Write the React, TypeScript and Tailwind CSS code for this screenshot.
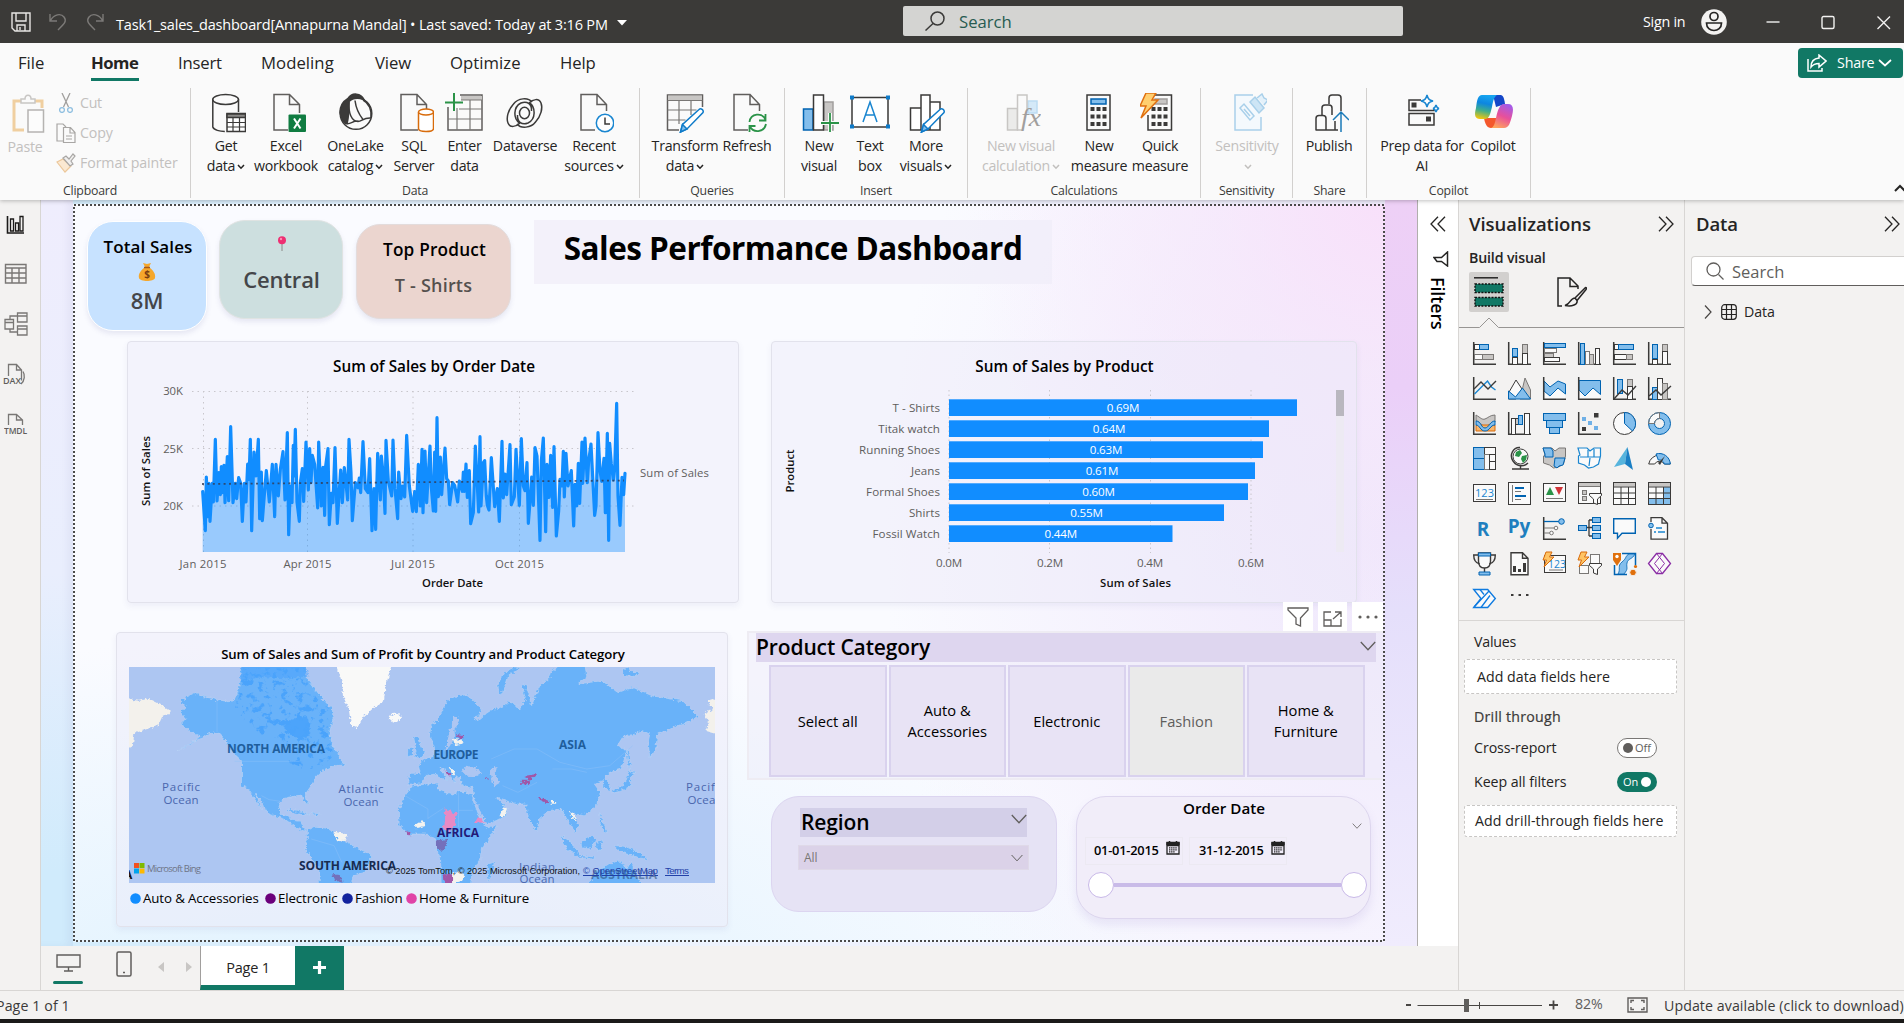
import React from "react";

type SvgProps = { children: React.ReactNode; className?: string };

const DK = "#3b3a39";
const BL = "#83beec";
const BS = "#0063b1";
const GR = "#c8c6c4";
const GS = "#797775";
const WH = "#fafafa";

const Box = ({ x, y, w, h, f = "none", s = DK }: { x: number; y: number; w: number; h: number; f?: string; s?: string }) => (
  <rect x={x + 0.5} y={y + 0.5} width={w} height={h} fill={f} stroke={s} />
);

const Ico = ({ children, className = "" }: SvgProps) => (
  <svg viewBox="0 0 40 40" fill="none" stroke={DK} strokeWidth="1.5" className={`h-10 w-10 shrink-0 ${className}`}>
    {children}
  </svg>
);

const Caret = ({ className = "" }: { className?: string }) => (
  <svg viewBox="0 0 8 6" className={`ml-0.5 inline-block h-1.5 w-2 ${className}`} fill="none" stroke="currentColor" strokeWidth="1.5">
    <path d="M1 1l3 3.2L7 1" />
  </svg>
);

/* ---------- ribbon icons ---------- */

const pencil = (
  <g stroke="#0f7bc9">
    <path d="M34 16.5c2-2 5 .8 4 3L22 36l-6.5 3 2-7.500z" fill="#fff" />
    <path d="M17.500 31.500l4.500 4.500-6.500 3z" fill={BL} />
  </g>
);

const GetData = (
  <Ico>
    <path d="M6.800 6.500v27.500c1 3 7 4.500 12 4.500M32.500 6.500V19" />
    <ellipse cx="19.600" cy="6.500" rx="12.900" ry="5" />
    <path d="M21 20.500h18.500v18H21z" fill="#fff" />
    <path d="M21 21h18.500v3.500H21z" fill="#8a8886" />
    <path d="M21 29.500h18.500M21 34h18.500M27 24v14.500M33.500 24v14.500" strokeWidth="1.200" />
  </Ico>
);
const Excel = (
  <Ico>
    <path d="M22 37H8V1.500h15.500l10 10V20M23.500 1.500v10h10" stroke="#605e5c" />
    <rect x="22.500" y="21.500" width="17.500" height="17.500" rx="1" fill="#107c41" stroke="none" />
    <path d="M28 25.500l6.500 10M34.500 25.500l-6.500 10" stroke="#fff" strokeWidth="2" />
  </Ico>
);
const OneLake = (
  <Ico>
    <circle cx="20" cy="20.500" r="15.800" />
    <path d="M12 5.500C16-1 25 0 28 6.500c-6-2-11-2-15 2 0 9 0 15-2 22-3 0-6-5-7-11 0-6 3-11 8-14z" fill={DK} />
    <path d="M13 8.500c-1 12 3 20 9 20 4 0 5-4 13-3.500M9 30c5 3 9-4 14-1.500M27 7c6 3 9 10 8 18M19 7.500c1 8 4 14 8 19" />
  </Ico>
);
const Sql = (
  <Ico>
    <path d="M24 37H7V1.500h16l9.500 10V17M23 1.500v10h9.500" stroke="#605e5c" />
    <path d="M24.500 19v16.500c0 4 15 4 15 0V19" fill="#fff" stroke="#d86b0b" />
    <ellipse cx="32" cy="19" rx="7.500" ry="3" fill="#fff" stroke="#d86b0b" />
  </Ico>
);
const Enter = (
  <Ico>
    <path d="M3 14v23h34V2H15" stroke="#605e5c" />
    <path d="M16 3h21v4H16z" fill={GR} stroke="none" />
    <path d="M12 15v22M25 7v30M3 26h34M14 16h23M16 7h21" stroke="#797775" strokeWidth="1.200" />
    <path d="M9 0v18M0 9.500h18" stroke="#2b9348" strokeWidth="2" />
  </Ico>
);
const Dataverse = (
  <Ico>
    <path d="M27 9C23 4 13 5 8.500 11 3 17 1 25 3 30c2 5 8 4 12 0" />
    <path d="M12 31c4 5 14 4 18.500-2 5.500-6 7.500-14 5.500-19-2-5-8-4-12 0" />
    <path d="M15 30.500C8 26 8 14 16 10c6-2.500 11 1 10.500 8M24 9.500c7 4.500 7 16.500-1 20.500-6 2.500-11-1-10.500-8" />
    <ellipse cx="19.500" cy="20" rx="5" ry="5.800" />
  </Ico>
);
const Recent = (
  <Ico>
    <path d="M21 37H7V1.500h16l9.500 10V18M23 1.500v10h9.500" stroke="#605e5c" />
    <circle cx="31" cy="30" r="8.700" fill="#fff" stroke="#1a86d0" />
    <path d="M31 24.500V31h5" />
  </Ico>
);
const Transform = (
  <Ico>
    <path d="M14 37H2.500V2h35v12" stroke="#605e5c" />
    <path d="M3 2.500h34V7H3z" fill={GR} stroke="none" />
    <path d="M2.500 7.500h35M2.500 17h29M2.500 27h18M14 7v24M26 7v15" stroke="#797775" strokeWidth="1.200" />
    {pencil}
  </Ico>
);
const Refresh = (
  <Ico>
    <path d="M21 37H7V1.500h16l9.500 10V18M23 1.500v10h9.500" stroke="#605e5c" />
    <path d="M22.500 29c1-9 13-10 16-2M38.500 21v6.500H32M39 31c-2 9-13 9-16 2.500M22.500 39v-6h6" stroke="#2b9348" strokeWidth="1.800" />
  </Ico>
);
const NewVisual = (
  <Ico>
    <path d="M4.500 16H14v21H4.500z" fill={BL} stroke={BS} />
    <path d="M25 9h9v28h-9z" fill={GR} stroke="#a19f9d" />
    <path d="M14.500 2h10v35h-10z" fill="#fff" />
    <path d="M31 20v19M22 30h18" stroke="#fafafa" strokeWidth="4" />
    <path d="M31 20v19M22 30h19" stroke="#2b9348" strokeWidth="1.800" />
  </Ico>
);
const TextBox = (
  <Ico>
    <path d="M2 4.500h36V34H2z" fill="#fff" />
    <path d="M13 29l7-20 7 20M15.500 22h9" stroke="#1a86d0" />
    <path d="M0 2.500h4v4H0zM36 2.500h4v4h-4zM0 31.500h4v4H0zM36 31.500h4v4h-4z" fill="#0f7bc9" stroke="none" />
  </Ico>
);
const MoreVisuals = (
  <Ico>
    <path d="M4.500 15H15v22H4.500zM24 9h10v28H24zM15 2h9v35h-9z" fill="#fff" />
    {pencil}
  </Ico>
);
const NewCalc = (
  <Ico>
    <g stroke="#c8c6c4">
      <path d="M6.500 15.500h10V37h-10z" fill="#ebebea" />
      <path d="M27 8h9v12h-9z" fill="#d4e9f8" stroke="#bcdcf2" />
      <path d="M26 18V2h-9.500v35H22" fill="#fafafa" />
    </g>
    <text x="20" y="33" fontFamily="Liberation Serif" fontStyle="italic" fontSize="25" fill="#a19f9d" stroke="none" textLength="20" lengthAdjust="spacingAndGlyphs">fx</text>
  </Ico>
);
const NewMeasure = (
  <Ico>
    <path d="M8 2h23v35H8z" />
    <path d="M12 6h15v5H12z" fill={BL} stroke={BS} />
    <path d="M11.500 16h16M11.500 23.500h16M11.500 31h16" strokeWidth="4" strokeDasharray="4 2" />
  </Ico>
);
const QuickMeasure = (
  <Ico>
    <path d="M14 2h17.500v35H8V22" />
    <path d="M15 6h12v5H15z" fill={GR} stroke="#a19f9d" />
    <path d="M11.500 16h16M11.500 23.500h16M11.500 31h16" strokeWidth="4" strokeDasharray="4 2" />
    <path d="M6 0h10l-4 7h6L1 25l5-12H0z" fill="#ffcf70" stroke="#e07010" />
  </Ico>
);
const Sensitivity = (
  <Ico>
    <g stroke="#a9d0ea">
      <path d="M26 2H8v35h26V24" fill="#f4f9fd" />
      <path d="M13 15l4-4 10 12-4 4zM17 16l6 7" />
      <path d="M23 9l5-5 9 11-5 5z" fill="#cde5f5" />
      <path d="M30 5l5-4 2 4 4 2-4 5" fill="#e4f1fa" />
    </g>
  </Ico>
);
const Publish = (
  <Ico>
    <path d="M7 37V25.500c0-2 1-3 3-3h4c2 0 3 1 3 3V37M13 22V15c0-2 1-3 3-3h4c2 0 3 1 3 3v7M20 11V5c0-2 1-3 3-3h6c2 0 3 1 3 3v13M6.500 37H29M26 37V28" />
    <path d="M32 39V19.500M24 27l8-8 8 8" stroke="#1a7ab8" />
  </Ico>
);
const Prep = (
  <Ico>
    <path d="M19 7H7v10.500h25V15M7 20.500h25V32H7z" />
    <path d="M9.500 9.500h5v5h-5zM24 23.500h5v5h-5z" fill={DK} stroke="none" />
    <path d="M25 2c1 4 2 5 6 6-4 1-5 2-6 6-1-4-2-5-6-6 4-1 5-2 6-6zM34 12c.5 2 1 3 3 3.500-2 .5-2.500 1.500-3 3.500-.5-2-1-3-3-3.500 2-.5 2.500-1.500 3-3.500z" fill="#fff" stroke="#1a86d0" />
  </Ico>
);
const Copilot = (
  <Ico>
    <defs>
      <linearGradient id="cpa" x1="0.500" y1="0" x2="0.300" y2="1">
        <stop offset="0" stopColor="#16a5f0" />
        <stop offset="0.350" stopColor="#0d86e0" />
        <stop offset="0.650" stopColor="#3fae8c" />
        <stop offset="1" stopColor="#f4c60c" />
      </linearGradient>
      <linearGradient id="cpb" x1="0.700" y1="0" x2="0.300" y2="1">
        <stop offset="0" stopColor="#a45be8" />
        <stop offset="0.500" stopColor="#e8509a" />
        <stop offset="1" stopColor="#ffa45c" />
      </linearGradient>
    </defs>
    <g stroke="none">
      <path d="M20 2h7c3 0 4 2 5 9l-9 3z" fill="#1547c8" />
      <path d="M11 25c1 6 3 10 7 10h5l2-10z" fill="#f4582c" />
      <path d="M9 2h15c-3 2-4 6-5 12-2 8-3 12-7 12H7c-5 0-6-4-4-11C4 7 5 2 9 2z" fill="url(#cpa)" />
      <path d="M31 11h4c5 0 6 4 4 12-2 7-3 12-8 12H18c3-1 4-5 5-10 2-9 4-14 8-14z" fill="url(#cpb)" />
    </g>
  </Ico>
);

type RItem = { icon: React.ReactNode; lines: [string, string?]; caret?: boolean; w: string; off?: boolean };
type RGroup = { label: string; w: string; pad: string; items: RItem[] };

const groups: RGroup[] = [
  {
    label: "Data", w: "w-[449px]", pad: "pl-[11px]",
    items: [
      { icon: GetData, lines: ["Get", "data"], caret: true, w: "w-12" },
      { icon: Excel, lines: ["Excel", "workbook"], w: "w-[72px]" },
      { icon: OneLake, lines: ["OneLake", "catalog"], caret: true, w: "w-[67px]" },
      { icon: Sql, lines: ["SQL", "Server"], w: "w-[50px]" },
      { icon: Enter, lines: ["Enter", "data"], w: "w-[51px]" },
      { icon: Dataverse, lines: ["Dataverse"], w: "w-[70px]" },
      { icon: Recent, lines: ["Recent", "sources"], caret: true, w: "w-[68px]" },
    ],
  },
  {
    label: "Queries", w: "w-[145px]", pad: "pl-2",
    items: [
      { icon: Transform, lines: ["Transform", "data"], caret: true, w: "w-[74px]" },
      { icon: Refresh, lines: ["Refresh"], w: "w-[50px]" },
    ],
  },
  {
    label: "Insert", w: "w-[183px]", pad: "pl-[5px]",
    items: [
      { icon: NewVisual, lines: ["New", "visual"], w: "w-[58px]" },
      { icon: TextBox, lines: ["Text", "box"], w: "w-11" },
      { icon: MoreVisuals, lines: ["More", "visuals"], caret: true, w: "w-[68px]" },
    ],
  },
  {
    label: "Calculations", w: "w-[233px]", pad: "pl-1.5",
    items: [
      { icon: NewCalc, lines: ["New visual", "calculation"], caret: true, w: "w-[94px]", off: true },
      { icon: NewMeasure, lines: ["New", "measure"], w: "w-[62px]" },
      { icon: QuickMeasure, lines: ["Quick", "measure"], w: "w-[60px]" },
    ],
  },
  { label: "Sensitivity", w: "w-[92px]", pad: "pl-1.5", items: [{ icon: Sensitivity, lines: ["Sensitivity", ""], caret: true, w: "w-20", off: true }] },
  { label: "Share", w: "w-[74px]", pad: "pl-[5px]", items: [{ icon: Publish, lines: ["Publish"], w: "w-[62px]" }] },
  {
    label: "Copilot", w: "w-[164px]", pad: "pl-[9px]",
    items: [
      { icon: Prep, lines: ["Prep data for", "AI"], w: "w-[92px]" },
      { icon: Copilot, lines: ["Copilot"], w: "w-[50px]" },
    ],
  },
];

const Ribbon = () => (
  <div className="relative z-10 flex h-[122px] shrink-0 bg-[#fafafa] pt-[10px] shadow-[0_1px_4px_rgba(0,0,0,0.25)]">
    <div className="flex h-[110px] w-[191px] shrink-0 flex-col border-r border-[#d2d0ce] text-[#c2c0be]">
      <div className="flex h-[90px] shrink-0">
        <div className="flex w-[58px] flex-col items-center pr-2 pt-1.5">
          <svg viewBox="0 0 40 40" className="ml-2.5 h-10 w-10 shrink-0" fill="none" strokeWidth="1.500">
            <path d="M14 36H4V7h7M25 7h7v7" stroke="#f0cfa0" strokeWidth="3" />
            <path d="M11 9V5h4c0-5 6-5 6 0h4v4z" stroke="#c8c6c4" fill="#fafafa" />
            <path d="M18 16h15.500v22H18z" stroke="#b5b3b1" fill="#fcfcfc" />
          </svg>
          <span className="mt-[3px] text-[14.200px] leading-5 tracking-[-0.200px]">Paste</span>
        </div>
        <div className="flex flex-col">
          <div className="flex h-[30px] items-center gap-1.5">
            <svg viewBox="0 0 16 20" className="h-5 w-4" fill="none" strokeWidth="1.300">
              <path d="M4 0l6.500 14M12 0L5.500 14" stroke="#a19f9d" />
              <circle cx="4" cy="17" r="2.400" stroke="#8fbfe0" />
              <circle cx="12" cy="17" r="2.400" stroke="#8fbfe0" />
            </svg>
            <span className="text-[14.200px] tracking-[-0.300px]">Cut</span>
          </div>
          <div className="flex h-[30px] items-center gap-1">
            <svg viewBox="0 0 20 20" className="-ml-0.5 h-5 w-5" fill="none" stroke="#a8a6a4" strokeWidth="1.200">
              <path d="M7 18H1V1h6l3 3M7.500 4.500h7l4.500 5V19.500H7.500zM14 5v5h5M10 13h6M10 16h6" />
            </svg>
            <span className="text-[14.200px] tracking-[-0.100px]">Copy</span>
          </div>
          <div className="flex h-[30px] items-center gap-1">
            <svg viewBox="0 0 20 20" className="-ml-0.5 h-5 w-5" fill="none" strokeWidth="1.200">
              <path d="M1 9l6-3 8 7-6 6z" fill="#fbe9d2" stroke="#ecc79a" />
              <path d="M7 5l3-2 3 3 4-5 2 2-4 5 2 3-3 2z" fill="#f0efee" stroke="#a8a6a4" />
            </svg>
            <span className="whitespace-nowrap text-[14.200px] tracking-[-0.100px]">Format painter</span>
          </div>
        </div>
      </div>
      <div className="mt-[3px] pr-2.5 text-center text-[12.300px] leading-5 tracking-[-0.200px] text-[#3b3a39]">Clipboard</div>
    </div>
    {groups.map((g) => (
      <div key={g.label} className={`flex h-[110px] shrink-0 flex-col border-r border-[#d2d0ce] ${g.w}`}>
        <div className={`flex h-[90px] shrink-0 pt-[5px] ${g.pad}`}>
          {g.items.map((it, i) => (
            <div key={i} className={`flex shrink-0 flex-col items-center ${it.w} ${it.off ? "text-[#c2c0be]" : "text-[#252423]"}`}>
              {it.icon}
              <div className="mt-[3px] whitespace-nowrap text-center text-[14.200px] leading-5 tracking-[-0.270px]">
                <div>{it.lines[0]}</div>
                {it.lines[1] !== undefined && (
                  <div>
                    {it.lines[1]}
                    {it.caret && <Caret />}
                  </div>
                )}
              </div>
            </div>
          ))}
        </div>
        <div className="mt-[3px] text-center text-[12.300px] leading-5 tracking-[-0.200px] text-[#3b3a39]">{g.label}</div>
      </div>
    ))}
    <div className="flex flex-1 items-end justify-end pb-1">
      <svg viewBox="0 0 12 8" className="-mr-0.5 mb-1 h-2 w-3" fill="none" stroke="#252423" strokeWidth="2">
        <path d="M1 7l5-5 5 5" />
      </svg>
    </div>
  </div>
);

const TitleBar = () => (
  <header className="flex h-[43px] shrink-0 items-center bg-[#3b3a38] text-white">
    <div className="flex w-[903px] items-center pl-[11px]">
      <svg viewBox="0 0 20 20" className="h-5 w-5" fill="none" stroke="#e8e6e4" strokeWidth="1.400">
        <path d="M1 1h18v18H4l-3-3zM5 1v8h10V1M6 19v-6h8v6M9 15v3" />
      </svg>
      <svg viewBox="0 0 18 18" className="ml-[18px] h-[18px] w-[18px]" fill="none" stroke="#7c7a78" strokeWidth="1.400">
        <path d="M1 1v7h7M1.500 7.500C5 1 12 0 15 4c3 4 1 6-6 13" />
      </svg>
      <svg viewBox="0 0 18 18" className="ml-[19px] h-[18px] w-[18px]" fill="none" stroke="#7c7a78" strokeWidth="1.400">
        <path d="M17 1v7h-7M16.500 7.500C13 1 6 0 3 4c-3 4-1 6 6 13" />
      </svg>
      <span className="ml-3 mt-1.5 whitespace-nowrap text-[14.500px] leading-5 tracking-[-0.190px]">
        Task1_sales_dashboard[Annapurna Mandal] • Last saved: Today at 3:16 PM
      </span>
      <svg viewBox="0 0 10 6" className="ml-[9px] mt-0.5 h-1.5 w-2.5" fill="#fff">
        <path d="M0 0h10L5 5.500z" />
      </svg>
    </div>
    <div className="mb-0.5 flex h-[30px] w-[500px] items-center rounded-[2px] bg-[#d4d4d2] pl-[22px]">
      <svg viewBox="0 0 20 20" className="h-5 w-5" fill="none" stroke="#3b3a39" strokeWidth="1.500">
        <circle cx="12.500" cy="7.500" r="6.500" />
        <path d="M8 12.500L.5 19.500" />
      </svg>
      <span className="ml-[14px] mt-0.5 text-[16.700px] text-[#275b50]">Search</span>
    </div>
    <div className="flex flex-1 items-center">
      <span className="ml-[240px] w-[46px] whitespace-nowrap text-[14.300px] tracking-[-0.250px]">Sign in</span>
      <svg viewBox="0 0 26 26" className="ml-3 h-[26px] w-[26px]" fill="none" stroke="#252423" strokeWidth="1.700">
        <circle cx="13" cy="13" r="12.800" fill="#f3f2f1" stroke="none" />
        <circle cx="13" cy="7.500" r="4" />
        <path d="M5.500 14h15c0 10-15 10-15 0z" />
      </svg>
      <svg viewBox="0 0 130 16" className="ml-[37px] mt-[3px] h-4 w-[130px]" fill="none" stroke="#f3f2f1" strokeWidth="1.400">
        <path d="M2.500 7h13" />
        <rect x="58" y="1.500" width="12" height="12" rx="1.500" />
        <path d="M113.500 1.500l12.500 12.500M126 1.500L113.500 14" />
      </svg>
    </div>
  </header>
);

const Menu = () => (
  <nav className="relative z-20 flex h-[35px] shrink-0 items-start bg-[#fafafa] text-[16.700px] text-[#252423]">
    <span className="ml-[18px] mt-2 w-[73px] leading-6">File</span>
    <span className="mt-2 flex h-[30px] w-12 flex-col justify-between whitespace-nowrap font-bold leading-6 tracking-[-0.500px]">
      Home
      <span className="h-[3px] w-12 shrink-0 bg-[#117865]" />
    </span>
    <span className="ml-[39px] mt-2 w-[83px] leading-6 tracking-[-0.200px]">Insert</span>
    <span className="mt-2 w-[114px] leading-6 tracking-[0.050px]">Modeling</span>
    <span className="mt-2 w-[75px] leading-6 tracking-[-0.100px]">View</span>
    <span className="mt-2 w-[110px] leading-6 tracking-[0.050px]">Optimize</span>
    <span className="mt-2 w-[75px] leading-6 tracking-[-0.100px]">Help</span>
    <span className="ml-auto mr-px mt-[5px] flex h-[30px] w-[105px] items-center rounded bg-[#117865] pl-[9px] text-white">
      <svg viewBox="0 0 20 18" className="h-[18px] w-5" fill="none" stroke="#fff" strokeWidth="1.500">
        <path d="M1 5v12h14v-3M12 1l7 6-7 6v-3.500c-4 0-6 1-8 3.500 0-5 3-8.500 8-9z" />
      </svg>
      <span className="ml-2.5 text-[14.300px] tracking-[-0.200px]">Share</span>
      <svg viewBox="0 0 14 8" className="ml-1 h-2 w-3.5" fill="none" stroke="#fff" strokeWidth="1.700">
        <path d="M1 1l6 5.500L13 1" />
      </svg>
    </span>
  </nav>
);

const Rail = () => (
  <aside className="flex w-[41px] shrink-0 flex-col border-r border-[#d8d6d4] bg-[#f3f2f1] pl-1 pt-[15px]">
    <svg viewBox="0 0 24 20" className="h-5 w-6" fill="none" stroke="#1b1a19" strokeWidth="1.300">
      <path d="M3.500 1v17H20" strokeWidth="1.600" />
      <path d="M6.500 4h3v12h-3zM11.500 8h3v8h-3zM16 1.500h3V16h-3z" />
    </svg>
    <svg viewBox="0 0 24 22" className="mt-7 h-[22px] w-6" fill="none" stroke="#797775" strokeWidth="1.400">
      <path d="M1.500 1.500H22v18.500H1.500zM1.500 5H22M1.500 10H22M1.500 15H22M8 5v15M15 5v15" />
    </svg>
    <svg viewBox="0 0 24 24" className="mt-[27px] h-6 w-6" fill="none" stroke="#797775" strokeWidth="1.300">
      <path d="M1 7.500h8.500v9.500H1zM1 10.500h8.500M13.500 1H23v9h-9.500zM13.500 4H23M13.500 14H23v9h-9.500zM13.500 17H23M6 7V4h7.500M6 17v3h7.500" />
    </svg>
    <svg viewBox="0 0 24 24" className="mt-[27px] h-6 w-6 overflow-visible" fill="none" stroke="#797775" strokeWidth="1.300">
      <path d="M4.500 13V1.500h8l5 5.500v10.500M12.500 1.500V7h5M19 8.500c2 3 2 9-2 12.500" />
      <text x="-1" y="21" fontSize="9" fontFamily="Open Sans" fill="#605e5c" stroke="none" fontWeight="600" textLength="18">DAX</text>
    </svg>
    <svg viewBox="0 0 24 24" className="mt-[26px] h-6 w-6" fill="none" stroke="#797775" strokeWidth="1.300">
      <path d="M4.500 12V1.500h8l6 5.500v5M12.500 1.500V7h6" />
      <text x="0" y="21" fontSize="8.500" fontFamily="Open Sans" fill="#605e5c" stroke="none" fontWeight="600" textLength="23">TMDL</text>
    </svg>
  </aside>
);

/* ---------- report visuals ---------- */

const series =
  "20,287 28,404 31,243 36,362 39,262 42,376 49,262 52,318 58,130 63,315 69,230 73,296 76,212 79,290 84,208 87,320 94,182 98,314 104,92 111,320 118,262 122,308 128,245 134,262 139,376 145,262 150,318 155,204 159,250 163,130 167,404 174,168 180,240 187,130 191,368 196,228 199,374 204,310 211,224 220,318 229,205 236,362 240,205 247,300 253,220 261,167 267,312 274,110 278,416 283,270 288,320 292,148 294,240 298,100 303,318 310,376 313,260 319,218 323,316 330,138 337,282 341,158 345,260 349,178 356,205 365,336 368,138 376,330 381,214 386,358 389,210 396,158 400,386 406,292 411,320 417,155 424,382 430,282 434,222 439,320 445,215 455,312 459,130 465,230 469,374 478,260 486,275 490,246 494,290 501,137 508,278 516,290 521,188 528,404 534,278 539,400 545,172 553,312 556,180 561,230 567,352 570,133 577,255 587,300 591,132 597,278 605,368 608,228 615,308 620,270 626,303 632,118 640,270 650,346 656,287 661,347 667,205 673,330 678,160 681,350 687,165 692,320 702,150 706,275 712,345 716,168 719,346 723,65 727,302 733,183 737,296 747,156 752,248 757,255 761,326 770,260 776,268 785,318 790,255 799,286 802,228 805,286 810,204 814,304 820,224 824,383 832,350 838,150 848,348 852,122 855,330 862,200 866,194 871,300 874,328 879,342 886,185 896,332 904,278 910,376 918,136 922,306 927,234 932,296 942,146 946,326 955,302 960,160 970,328 976,128 982,270 987,284 993,200 997,382 1002,318 1007,243 1012,328 1017,155 1023,180 1032,433 1036,195 1042,126 1049,407 1053,205 1059,304 1064,178 1070,334 1074,152 1081,420 1088,345 1092,250 1098,270 1102,166 1105,303 1110,172 1116,270 1126,224 1133,390 1137,265 1142,330 1147,202 1151,322 1158,138 1160,262 1167,126 1174,260 1178,195 1185,144 1196,358 1200,330 1206,110 1212,225 1217,256 1224,187 1228,350 1234,112 1238,433 1241,142 1246,204 1252,252 1256,220 1262,22 1266,300 1272,388 1278,244 1283,296 1287,232";

const card = "absolute rounded-[4px] border border-[#e2e2ec] bg-[#ece8f8]/45 shadow-[0_3px_6px_rgba(90,90,160,0.08)]";

const LineChart = () => (
  <div className={`${card} left-[54px] top-[137px] h-[262px] w-[612px]`}>
    <div className="mt-3 pl-0.5 text-center text-[15.300px] font-semibold leading-6 tracking-[0.020px]">Sum of Sales by Order Date</div>
    <svg viewBox="128 342 611 262" className="absolute left-0 top-0 h-[262px] w-[611px]" fontFamily="Open Sans" fontSize="11.300" fill="#605e5c">
      <g stroke="#c8c6cc" strokeDasharray="1.500 4">
        <path d="M192 391.500H634M192 448.500H634M192 506H634M203.500 391V552M307.500 391V552M413 391V552M519.500 391V552" />
      </g>
      <g transform="translate(196 396) scale(.33333)">
        <polygon points={`20,468 ${series} 1287,468`} fill="#118dff" fillOpacity=".4" />
        <polyline points={series} fill="none" stroke="#118dff" strokeWidth="9.500" strokeLinejoin="round" strokeLinecap="round" />
      </g>
      <path d="M202 484L624 480.500" stroke="#353a50" strokeWidth="1.800" strokeDasharray="2 3.400" strokeOpacity=".8" />
      <g textAnchor="end">
        <text x="183" y="395">30K</text>
        <text x="183" y="452.500">25K</text>
        <text x="183" y="510">20K</text>
      </g>
      <g textAnchor="middle">
        <text x="203" y="567.500" textLength="47">Jan 2015</text>
        <text x="307.500" y="567.500" textLength="48">Apr 2015</text>
        <text x="413" y="567.500" textLength="44">Jul 2015</text>
        <text x="519.500" y="567.500" textLength="49">Oct 2015</text>
        <g fill="#111" fontWeight="600">
          <text x="452.500" y="586.500" textLength="61">Order Date</text>
          <text transform="translate(150 471) rotate(-90)" textLength="70">Sum of Sales</text>
        </g>
      </g>
      <text x="640" y="477" textLength="69">Sum of Sales</text>
    </svg>
  </div>
);

const bars: [string, string, number][] = [
  ["T - Shirts", "0.69M", 348],
  ["Titak watch", "0.64M", 320],
  ["Running Shoes", "0.63M", 314],
  ["Jeans", "0.61M", 306],
  ["Formal Shoes", "0.60M", 299],
  ["Shirts", "0.55M", 275],
  ["Fossil Watch", "0.44M", 223.500],
];

const BarChart = () => (
  <div className={`${card} left-[698px] top-[137px] h-[262px] w-[586px]`}>
    <div className="mt-3 pl-px text-center text-[15.300px] font-semibold leading-6 tracking-[0.050px]">Sum of Sales by Product</div>
    <svg viewBox="772 342 586 262" className="absolute left-0 top-0 h-[262px] w-[586px]" fontFamily="Open Sans" fontSize="11.600" fill="#605e5c">
      <path d="M949 390V553M1049.500 390V553M1150.500 390V553M1251 390V553" stroke="#c8c6cc" strokeDasharray="1.500 3" />
      {bars.map(([name, v, w], i) => (
        <g key={name}>
          <rect x="949" y={399.300 + i * 21} width={w} height="16.700" fill="#118dff" />
          <text x="940" y={411.500 + i * 21} textAnchor="end" letterSpacing="0.050">{name}</text>
          <text x={949 + w / 2} y={411.500 + i * 21} textAnchor="middle" fill="#fff" letterSpacing="-0.200">{v}</text>
        </g>
      ))}
      <g textAnchor="middle">
        <text x="949" y="567" letterSpacing="-0.200">0.0M</text>
        <text x="1050" y="567" letterSpacing="-0.200">0.2M</text>
        <text x="1150" y="567" letterSpacing="-0.200">0.4M</text>
        <text x="1251" y="567" letterSpacing="-0.200">0.6M</text>
        <g fill="#111" fontWeight="600" fontSize="11.300">
          <text x="1135.500" y="586.500" textLength="71">Sum of Sales</text>
          <text transform="translate(794 471) rotate(-90)" textLength="43">Product</text>
        </g>
      </g>
      <rect x="1336" y="390" width="8" height="162" fill="#edeaf3" />
      <rect x="1336" y="390" width="8" height="26" fill="#b9b7bf" />
    </svg>
  </div>
);

const legend: [string, string, string][] = [
  ["Auto & Accessories", "fill-[#118dff]", "w-[135px]"],
  ["Electronic", "fill-[#6b007b]", "w-[77px]"],
  ["Fashion", "fill-[#12239e]", "w-[64px]"],
  ["Home & Furniture", "fill-[#e044a7]", "w-[125px]"],
];

const MapVisual = () => (
  <div className={`${card} left-[43px] top-[428px] h-[295px] w-[612px] pl-3 pr-2.5`}>
    <div className="mt-[11px] whitespace-nowrap text-center text-[13.200px] font-semibold leading-5 tracking-[-0.100px]">
      Sum of Sales and Sum of Profit by Country and Product Category
    </div>
    <div className="relative mt-[3px] h-[216px] w-[586px] overflow-hidden bg-[#adc6f2]">
      <svg viewBox="24 24 1531 648" preserveAspectRatio="none" className="absolute inset-0 h-full w-full">
        <defs>
          <filter id="coast" x="-5%" y="-5%" width="110%" height="110%" colorInterpolationFilters="sRGB">
            <feTurbulence type="fractalNoise" baseFrequency="0.120" numOctaves="3" seed="4" />
            <feDisplacementMap in="SourceGraphic" scale="14" xChannelSelector="R" yChannelSelector="G" />
          </filter>
          <filter id="lakes" x="0" y="0" width="100%" height="100%" colorInterpolationFilters="sRGB">
            <feTurbulence type="fractalNoise" baseFrequency="0.050" numOctaves="4" seed="9" />
            <feColorMatrix values="0 0 0 0 .29  0 0 0 0 .64  0 0 0 0 .985  0 9 0 0 -4.900" />
            <feComposite in2="SourceGraphic" operator="in" />
          </filter>
        </defs>
        <g filter="url(#coast)">
          <g fill="#f9f9f8">
            <path d="M565,10L580,70 583,110 598,150 605,200 620,208 635,175 665,145 690,125 695,80 712,10z" />
            <path d="M0,118L50,125 75,118 105,135 135,160 110,175 100,200 60,215 38,222 34,260 0,280z" fill="#f3f1ec" />
            <path d="M1590,105L1535,125 1550,150 1525,165 1540,190 1530,215 1590,235z" fill="#f3f1ec" />
            <ellipse cx="720" cy="176" rx="15" ry="12" />
          </g>
          <g fill="#69b2f9" stroke="#bdd6f5" strokeWidth="1.500" strokeLinejoin="round">
            <path d="M320,5L315,60 308,100 300,122 285,128 255,122 225,115 195,102 170,115 160,130 172,145 158,160 172,178 160,195 178,212 195,225 212,232 185,255 150,277 190,248 218,236 230,225 255,220 270,235 280,255 295,280 318,305 318,380 335,390 352,420 372,452 355,405 368,425 390,465 430,480 455,500 475,515 490,515 480,505 472,487 450,484 440,470 423,468 415,435 430,418 455,412 475,408 482,432 492,435 485,405 500,380 515,350 530,335 560,320 590,318 575,300 570,280 555,260 548,220 557,180 555,150 530,120 510,90 490,60 485,5z" />
            <path d="M490,515L510,502 550,510 575,540 600,555 625,570 655,585 655,605 640,640 610,650 600,690 522,690 520,625 500,600 483,570 490,540z" />
            <path d="M765,380L830,372 835,395 870,408 885,395 920,405 925,430 945,490 958,508 985,500 965,540 945,570 940,605 920,640 915,690 840,690 838,600 825,570 830,545 800,525 755,525 730,500 728,450 745,410z" />
            <path d="M810,230L812,200 830,185 840,160 855,125 880,110 905,108 925,125 945,150 940,170 925,175 935,185 955,165 975,150 1000,145 1020,125 1045,150 1060,120 1050,80 1060,75 1070,110 1075,140 1085,110 1100,75 1120,60 1125,40 1160,10 1215,16 1220,55 1195,75 1230,70 1260,65 1300,100 1340,85 1390,110 1440,120 1470,125 1510,170 1500,180 1475,195 1455,200 1430,215 1405,225 1400,270 1385,295 1380,250 1385,225 1365,215 1340,230 1315,232 1300,260 1325,275 1310,330 1280,340 1265,355 1275,365 1282,395 1262,385 1262,365 1240,375 1255,400 1245,440 1215,470 1185,465 1200,500 1190,520 1170,485 1155,450 1120,455 1095,480 1090,520 1068,480 1060,435 1030,435 1000,420 985,415 1012,450 1010,470 960,497 935,450 925,420 922,385 892,378 890,352 875,355 875,372 855,335 835,325 858,368 820,345 800,350 785,375 755,375 757,343 785,343 780,320 790,305 820,290 822,265z" />
            <path d="M768,235l14,0 4,25 12,20 -8,15 -22,2 6,-20zM752,268l14,-4 -2,24 -12,6z" />
            <path d="M990,105L988,75 1005,40 1030,24 1045,26 1012,55 1000,100z" />
            <path d="M1327,270l8,50 -6,10 -5,-50zM1330,335l16,6 -12,10 0,30 -22,14 -26,8 2,-10 26,-12 10,-20z" />
            <path d="M960,615l18,-6 -4,35 -12,22z" />
            <path d="M1150,530l20,12 35,45 -8,6 -30,-25zM1200,590l40,4 0,6 -40,-4zM1205,550l30,-22 8,14 -12,28 -24,-4zM1245,550l16,-4 -4,28 -10,0zM1290,560l30,2 40,20 20,20 -30,-8 -40,-14zM1255,460l8,30 12,30 -10,-2 -12,-30z" />
            <path d="M1220,690L1240,642 1280,615 1300,604 1315,612 1325,630 1335,608 1350,650 1372,690z" />
            <path d="M435,452l30,2 30,12 -14,2 -46,-12zM500,462l24,3 -10,6z" />
            <path d="M1310,32l20,-8 4,14 24,0 -10,14 -30,-2z" />
          </g>
          <g fill="#adc6f2">
            <path d="M850,275L858,235 868,198 868,175 882,172 886,192 874,210 876,232 862,262z" />
            <path d="M895,338L905,320 925,325 947,340 930,352 905,350z" />
            <path d="M968,335L985,322 982,345 992,372 978,382 972,360z" />
            <path d="M918,415L935,440 957,490 962,500 945,480z" />
          </g>
          <path d="M430,200l20,-20 30,-10 12,10 5,30 -10,25 -20,14 -14,-20 -22,-10z" fill="#4ca4fb" />
          <path d="M318,10h165l10,42 -60,6 -60,-4 -60,12z" fill="#4ca4fb" fillOpacity=".6" />
          <path d="M560,518l32,8 0,16 -26,2zM870,240l22,2 4,12 -20,4zM862,325l10,4 4,20 -8,-2zM770,500l20,-14 8,14 -22,8zM868,672v-28l20,-8 12,14 -12,22zM992,472l10,-30 10,6 -6,22zM1172,455l14,6 8,24 -12,-8zM1128,426h12v8h-12z" fill="#f4f3ef" />
          <path d="M848,448L880,465 876,500 862,520 846,510 850,480zM928,490l8,-16 18,18z" fill="#e88ac4" />
          <path d="M826,545l30,-6 -2,22 -14,14 -14,-8zM552,645l24,4 6,22 -18,-6z" fill="#7470bb" />
          <path d="M846,646h22v40h-18zM1060,350l34,-6 -14,14 -14,4zM1050,365l22,0 -4,10 -20,2zM1095,415l28,12 -6,5 -20,-10zM878,226l20,2 -2,14 -12,-4zM848,332l16,12 -4,6zM748,515l14,14 -10,-2zM955,354l10,4 -4,8z" fill="#a057a8" />
        </g>
        <path d="M322,28L318,60 308,115 300,150 350,220 420,240 450,330 520,330 560,290 542,220 548,150 490,70 482,28z" fill="#fff" filter="url(#lakes)" />
        <path d="M254,122V220M300,307H470M370,410l20,12 30,5M745,410l60,40 0,30M805,478l40,-30M885,400v54h38M885,454v50M970,300l60,-30 60,0 60,40 70,20 60,-10 60,-60M1130,330l50,0 40,10M1000,380l40,20 50,-30M500,540l60,20 20,50" fill="none" stroke="#8fc1f7" strokeWidth="1.200" />
      </svg>
      <svg viewBox="129 668 586 216" className="absolute inset-0 h-full w-full" fontFamily="Open Sans">
        <g fontSize="12" fontWeight="700" fill="#1f5e9c">
          <text x="227" y="754" textLength="98">NORTH AMERICA</text>
          <text x="433.500" y="760" textLength="45">EUROPE</text>
          <text x="559" y="750" textLength="27">ASIA</text>
          <text x="437" y="838" textLength="42" fill="#231a78">AFRICA</text>
          <text x="299" y="871" textLength="97" fill="#182c50">SOUTH AMERICA</text>
          <text x="591" y="880" textLength="66" fill="#1c3d66" fillOpacity=".5">AUSTRALIA</text>
          <text x="124" y="880" fill="#111">A</text>
        </g>
        <g fontSize="11.500" fill="#4a66ae" textAnchor="middle">
          <text x="181" y="792" textLength="38">Pacific</text>
          <text x="181" y="805" textLength="35">Ocean</text>
          <text x="361" y="794" textLength="45">Atlantic</text>
          <text x="361" y="807" textLength="35">Ocean</text>
          <text x="705" y="792" textLength="38">Pacific</text>
          <text x="705" y="805" textLength="35">Ocean</text>
          <text x="537" y="872" textLength="36">Indian</text>
          <text x="537" y="884" textLength="35">Ocean</text>
        </g>
        <path d="M134 864h5v5h-5z" fill="#f25022" />
        <path d="M139.500 864h5v5h-5z" fill="#7fba00" />
        <path d="M134 869.500h5v5h-5z" fill="#00a4ef" />
        <path d="M139.500 869.500h5v5h-5z" fill="#ffb900" />
        <text x="147" y="873" fontSize="9.500" fill="#6d7486" textLength="54">Microsoft Bing</text>
        <g fontFamily="Liberation Sans" fontSize="9.800" fill="#111">
          <text x="386" y="875" textLength="194" lengthAdjust="spacingAndGlyphs">© 2025 TomTom, © 2025 Microsoft Corporation,</text>
          <g fill="#1f3fa8" textDecoration="underline">
            <text x="583" y="875" textLength="75" lengthAdjust="spacingAndGlyphs">© OpenStreetMap</text>
            <text x="665" y="875" textLength="24">Terms</text>
          </g>
        </g>
      </svg>
    </div>
    <div className="mt-[3px] flex">
      {legend.map(([name, fill, w]) => (
        <span key={name} className={`flex items-center whitespace-nowrap text-[13.300px] leading-6 tracking-[-0.120px] ${w}`}>
          <svg viewBox="0 0 11 11" className={`ml-px mr-0.5 h-[11px] w-[11px] shrink-0 ${fill}`}>
            <circle cx="5.500" cy="5.500" r="5.300" />
          </svg>
          {name}
        </span>
      ))}
    </div>
  </div>
);

const Chevron = ({ className = "" }: { className?: string }) => (
  <svg viewBox="0 0 16 10" className={className} fill="none" stroke="#605e5c" strokeWidth="1.300">
    <path d="M.8 1L8 8.800 15.200 1" />
  </svg>
);

const tile = "flex h-28 w-[117.500px] items-center justify-center border-2 border-[#d9d2ee] bg-[#e8e3f5] text-center text-[14.700px] leading-[21px]";

const CategorySlicer = () => (
  <div className="absolute left-[674px] top-[427px] h-[149px] w-[637px] border-2 border-r-0 border-[#eeecf3] bg-[#ece8f8]/40">
    <div className="ml-[7px] flex h-[29px] w-[620px] justify-between bg-[#ded6ef]">
      <span className="whitespace-nowrap text-[21px] font-semibold leading-[28px] tracking-[-0.120px]">Product Category</span>
      <Chevron className="mt-2 h-[10px] w-4" />
    </div>
    <div className="ml-5 mt-[3px] flex gap-[2px]">
      <div className={tile}>Select all</div>
      <div className={tile}>Auto &amp;<br />Accessories</div>
      <div className={tile}>Electronic</div>
      <div className="flex h-28 w-[117.500px] items-center justify-center border-2 border-[#d9d2ee] bg-[#eaeaea] text-[14.700px] text-[#605e5c]">Fashion</div>
      <div className={tile}>Home &amp;<br />Furniture</div>
    </div>
  </div>
);

const tool = "flex h-[29px] items-center justify-center bg-white";

const VisualTools = () => (
  <div className="absolute left-[1210px] top-[398px] flex gap-[5px]">
    <span className={`${tool} w-[30px]`}>
      <svg viewBox="0 0 22 20" className="h-5 w-[22px]" fill="none" stroke="#605e5c" strokeWidth="1.300">
        <path d="M1 1h20v2l-7.500 8v8l-4.500-2v-6L1 3z" />
      </svg>
    </span>
    <span className={`${tool} w-[29px]`}>
      <svg viewBox="0 0 19 16" className="mt-1 h-4 w-[19px]" fill="none" stroke="#605e5c" strokeWidth="1.300">
        <path d="M8 1H1v14h17V8M1 9h7v6M10 8l8-7M12 1h6v5" />
      </svg>
    </span>
    <span className={`${tool} w-[31px]`}>
      <svg viewBox="0 0 20 4" className="h-1 w-5" fill="#605e5c">
        <circle cx="2" cy="2" r="1.600" />
        <circle cx="10" cy="2" r="1.600" />
        <circle cx="18" cy="2" r="1.600" />
      </svg>
    </span>
  </div>
);

const RegionSlicer = () => (
  <div className="absolute left-[698px] top-[592px] h-[116px] w-[286px] rounded-[28px] border border-[#dcd5f0] bg-[#e6e3f5]">
    <div className="ml-[28px] mt-[11px] flex h-[29px] w-[227px] justify-between bg-[#d3cfe8]">
      <span className="pl-px text-[21px] font-semibold leading-[29px] tracking-[-0.100px]">Region</span>
      <Chevron className="mt-1.5 h-[10px] w-4" />
    </div>
    <div className="ml-[26px] mt-2 flex h-[25px] w-[231px] items-center justify-between border border-[#dfd9e8] bg-[#dbd2e8] px-[5px] text-[12px] text-[#797775]">
      <span>All</span>
      <Chevron className="h-2 w-3" />
    </div>
  </div>
);

const Calendar = () => (
  <svg viewBox="0 0 14 14" className="mb-1.5 h-3.5 w-3.5" fill="none" stroke="#222" strokeWidth="1.300">
    <path d="M1 2h12v11H1zM1 4.500h12" />
    <path d="M1 1.500h12v2H1z" fill="#222" />
    <path d="M3.500 0v2M10.500 0v2" strokeWidth="1.500" />
    <path d="M3 6.800h8.500M3 8.800h8.500M3 10.800h6" strokeWidth="1.200" strokeDasharray="1.400 .7" />
  </svg>
);

const DateSlicer = () => (
  <div className="absolute left-[1003px] top-[592px] h-[123px] w-[295px] rounded-[30px] border border-[#ddd6ee] bg-[#f1edf9] shadow-[0_6px_10px_rgba(150,130,200,0.15)]">
    <div className="mt-px pl-px text-center text-[15.200px] font-semibold leading-5">Order Date</div>
    <div className="flex justify-end pr-2">
      <Chevron className="mt-[5px] h-1.5 w-2.5" />
    </div>
    <div className="ml-2 mt-2 flex gap-1.5 text-[12.800px] font-semibold tracking-[-0.220px]">
      <span className="flex h-7 w-[98px] items-center justify-between border border-[#ece9f2] pl-2 pr-[2px]">01-01-2015<Calendar /></span>
      <span className="flex h-7 w-[98px] items-center justify-between border border-[#ece9f2] pl-[9px] pr-px">31-12-2015<Calendar /></span>
    </div>
    <div className="ml-[11px] mt-[7px] flex w-[279px] items-center">
      <span className="h-[26px] w-[26px] rounded-full border-[1.500px] border-[#c8b8e8] bg-white" />
      <span className="h-1 flex-1 bg-[#c9bbe8]" />
      <span className="h-[26px] w-[26px] rounded-full border-[1.500px] border-[#c8b8e8] bg-white" />
    </div>
  </div>
);

const Page = () => (
  <div className="relative mt-1 h-[738px] w-[1312px] shrink-0 bg-[radial-gradient(ellipse_420px_420px_at_100%_0%,#f8e0fa_0%,#f6e4fa99_40%,transparent_100%),radial-gradient(ellipse_500px_700px_at_100%_45%,#f0e8fc_0%,transparent_100%),radial-gradient(ellipse_900px_420px_at_20%_115%,#dcf1fe_0%,transparent_100%)] bg-[#fafbff]">
    <div className="absolute left-[14px] top-[17px] flex h-[110px] w-[120px] flex-col items-center rounded-[26px] border border-white bg-[#c7e2ff] pt-[13px] shadow-[0_3px_5px_rgba(90,90,160,0.12)]">
      <span className="whitespace-nowrap pl-0.5 text-[17px] font-semibold leading-6 tracking-[0.100px]">Total Sales</span>
      <svg viewBox="0 0 18 20" className="mt-[3px] h-5 w-[18px]">
        <path d="M5 1l2 4C3 8 0 12 1 16c1 4 15 4 16 0 1-4-2-8-6-11l2-4-4 1z" fill="#f5a72c" />
        <path d="M6 5.500h6" stroke="#a5571a" strokeWidth="1.500" />
        <text x="9" y="16" textAnchor="middle" fontFamily="Open Sans" fontWeight="700" fontSize="10" fill="#7a3d12">$</text>
      </svg>
      <span className="mt-1 text-[22px] font-semibold leading-7 tracking-[-0.100px] text-[#44464a]">8M</span>
    </div>
    <div className="absolute left-[146px] top-4 flex h-[99px] w-[124px] flex-col items-center rounded-[26px] border border-[#dfe3e2] bg-[#cddfdf] pl-px pt-[15px] shadow-[0_3px_5px_rgba(90,90,160,0.12)]">
      <svg viewBox="0 0 10 15" className="h-[15px] w-2.5">
        <path d="M5 7v8" stroke="#8a8886" />
        <circle cx="5" cy="4.200" r="4" fill="#ee2f72" />
        <circle cx="4" cy="3" r="1.200" fill="#ff8db4" />
      </svg>
      <span className="mt-3.5 text-[22px] font-semibold leading-7 tracking-[-0.150px] text-[#44464a]">Central</span>
    </div>
    <div className="absolute left-[283px] top-5 flex h-[95px] w-[155px] flex-col items-center rounded-[24px] border border-[#e3dcdc] bg-[#ebd5cf] pt-[13px] shadow-[0_3px_5px_rgba(90,90,160,0.12)]">
      <span className="whitespace-nowrap pl-0.5 text-[17.200px] font-semibold leading-6 tracking-[0.200px]">Top Product</span>
      <span className="mt-[11px] text-[18px] font-semibold leading-6 tracking-[0.200px] text-[#55504e]">T - Shirts</span>
    </div>
    <div className="absolute left-[461px] top-4 flex h-[64px] w-[518px] justify-center bg-[#efecf8]/70">
      <span className="mt-[5px] whitespace-nowrap text-[31.500px] font-bold leading-[46px] tracking-[-0.500px]">Sales Performance Dashboard</span>
    </div>
    <LineChart />
    <BarChart />
    <MapVisual />
    <CategorySlicer />
    <VisualTools />
    <RegionSlicer />
    <DateSlicer />
    <svg viewBox="0 0 1312 738" className="absolute inset-0 h-full w-full" fill="none">
      <rect x="1" y="1" width="1310" height="736" stroke="#4a4a4a" strokeWidth="2" strokeDasharray="2 2" />
    </svg>
  </div>
);

const Canvas = () => (
  <div className="flex h-[746px] w-[1376px] bg-[linear-gradient(90deg,#d3ecfc,#eef3fd_50%,#f0ecfc)]">
    <div className="w-8 shrink-0 bg-[linear-gradient(180deg,#efedfd_0%,#e9eefd_50%,#d0ebfc_90%)] shadow-[inset_-6px_0_6px_rgba(80,80,140,0.05)]" />
    <Page />
    <div className="w-8 shrink-0 bg-[linear-gradient(180deg,#eed0f6_0%,#ebcff8_25%,#e5dffb_55%,#f0ecfd_100%)]" />
  </div>
);

const PageTabs = () => (
  <div className="flex h-11 items-stretch bg-[#f3f2f1]">
    <div className="ml-3 flex w-[30px] flex-col items-center">
      <svg viewBox="0 0 25 18" className="mt-2 h-[18px] w-[25px] shrink-0" fill="none" stroke="#605e5c" strokeWidth="1.400">
        <path d="M1 1h23v12H1zM12.500 13v4M8 17h9" />
      </svg>
      <span className="mt-[9px] h-[3px] w-[30px] shrink-0 rounded bg-[#117865]" />
    </div>
    <svg viewBox="0 0 16 26" className="ml-[33px] mt-[5px] h-[26px] w-4" fill="none" stroke="#605e5c" strokeWidth="1.500">
      <rect x="1" y="1" width="14" height="24" rx="1.500" />
      <path d="M7 21.500h2" />
    </svg>
    <svg viewBox="0 0 34 10" className="ml-[26px] mt-4 h-2.5 w-[34px]" fill="#c8c6c4">
      <path d="M6 0v10L0 5zM28 0v10l6-5z" />
    </svg>
    <div className="ml-2 flex w-[95px] items-center justify-center border-b-[5px] border-l border-b-[#117865] border-l-[#a19f9d] bg-white pt-1 text-[14.500px] tracking-[-0.200px] text-[#252423]">Page 1</div>
    <div className="flex w-[49px] items-center justify-center bg-[#117865] pb-0.5">
      <svg viewBox="0 0 13 13" className="h-[13px] w-[13px]" stroke="#fff" strokeWidth="3.200">
        <path d="M6.500 0v13M0 6.500h13" />
      </svg>
    </div>
  </div>
);

/* ---------- visualization gallery ---------- */

const axes = <path d="M.7 0v22.300H23" stroke={DK} strokeWidth="1.500" fill="none" />;
const bolt = <path d="M3 0h6L6.500 5H11L1 15l2.500-7H0z" fill="#ffc464" stroke="#d86b0b" />;
const funnelSmall = <path d="M11.500 11.500h12v2l-4 3.500v5.500l-4-1.500v-4l-4-3.500z" fill={WH} stroke={DK} />;

const gallery: React.ReactNode[] = [
  <>{axes}<Box x={1} y={2} w={5} h={5} f={WH} /><Box x={6} y={2} w={9} h={5} f={BL} s={BS} /><Box x={1} y={12} w={8} h={5} f={WH} s={GS} /><Box x={9} y={12} w={11} h={5} f={GR} s={GS} /></>,
  <>{axes}<Box x={4} y={6} w={5} h={8} f={BL} s={BS} /><Box x={4} y={15} w={5} h={7} f={WH} /><Box x={14} y={2} w={5} h={9} f={GR} s={GS} /><Box x={14} y={11} w={5} h={11} f={WH} /></>,
  <>{axes}<Box x={1} y={1} w={21} h={4} f={BL} s={BS} /><Box x={1} y={6} w={12} h={4} f={WH} s={GS} /><Box x={1} y={11} w={9} h={4} f={GR} s={GS} /><Box x={1} y={15} w={15} h={4} f={WH} /></>,
  <>{axes}<Box x={2} y={1} w={4} h={21} f={BL} s={BS} /><Box x={7} y={9} w={4} h={13} f={WH} s={GS} /><Box x={11} y={12} w={4} h={10} f={GR} s={GS} /><Box x={17} y={6} w={4} h={16} f={WH} /></>,
  <>{axes}<Box x={1} y={2} w={4} h={5} f={WH} /><Box x={5} y={2} w={15} h={5} f={BL} s={BS} /><Box x={1} y={12} w={12} h={5} f={WH} /><Box x={13} y={12} w={6} h={5} f={GR} s={GS} /></>,
  <>{axes}<Box x={4} y={2} w={5} h={14} f={BL} s={BS} /><Box x={4} y={17} w={5} h={5} f={WH} /><Box x={14} y={2} w={5} h={7} f={GR} s={GS} /><Box x={14} y={9} w={5} h={13} f={WH} /></>,
  <>{axes}<path d="M1.500 17l9-9 4-4 4 6 4 3" stroke="#1a86d0" strokeWidth="1.400" fill="none" /><path d="M1 12l7-7 7 7 8-8" stroke={DK} strokeWidth="1.400" fill="none" /></>,
  <><path d="M17 1l5.500 12v9H12z" fill={GR} stroke={GS} /><path d="M.5 16L8 3l6 9-6 10H.5z" fill={WH} stroke={DK} /><path d="M.5 14l7 6 7-9 8 11H.5z" fill={BL} stroke={BS} /></>,
  <><path d="M1 14l6 5 8-8 7 7v4H1z" fill={WH} /><path d="M1 4l6 6 8-6 7.500 3v10l-7.500-6-8 8-6-5z" fill={BL} stroke={BS} />{axes}</>,
  <><path d="M1 14l6 5 8-8 7 7v4H1z" fill={WH} /><path d="M1 3.500h21.500v14L15 11l-8 8-6-6z" fill={BL} stroke={BS} />{axes}</>,
  <>{axes}<Box x={4} y={2} w={5} h={14} f={BL} s={BS} /><Box x={14} y={2} w={5} h={7} f={GR} s={GS} /><Box x={14} y={9} w={5} h={13} f={WH} /><path d="M1 22l8-9 6 5 8-9" stroke={DK} strokeWidth="1.400" fill="none" /></>,
  <>{axes}<Box x={4} y={10} w={5} h={12} f={BL} s={BS} /><Box x={9} y={1} w={5} h={21} f={WH} /><Box x={14} y={6} w={5} h={16} f={GR} s={GS} /><path d="M1 19l7-6 5 5 10-9" stroke={DK} strokeWidth="1.400" fill="none" /></>,
  <><path d="M3 3c5 3 6 5 9 4s5-4 10-4v7c-4 0-6 4-10 4s-5-5-9-5z" fill={GR} stroke={GS} /><path d="M3 13h19v6H3z" fill="#f7b56b" stroke="#d86b0b" /><path d="M3 9c5 0 5 7 9 7s5-7 10-7v4c-5 0-5 6-10 6s-5-6-9-6z" fill={BL} stroke={BS} />{axes}</>,
  <>{axes}<Box x={3} y={6} w={4} h={16} f={WH} /><Box x={7} y={6} w={3} h={6} f={GR} /><Box x={10} y={3} w={4} h={9} f={BL} s={BS} /><Box x={16} y={1} w={5} h={21} f={WH} /></>,
  <><Box x={0} y={1} w={22} h={7} f={BL} s={BS} /><Box x={3} y={8} w={16} h={7} f={BL} s={BS} /><Box x={6} y={15} w={10} h={6} f={BL} s={BS} /></>,
  <>{axes}<path d="M4 5h4v4H4zM10 9h4v4h-4zM16 14h4v4h-4z" fill="#6fb0e6" /><path d="M16 1h4.500v4.500H16zM4 15h4v4H4z" fill={DK} /></>,
  <><circle cx="11.500" cy="11.500" r="11" fill={WH} stroke={DK} /><path d="M11.500.5a11 11 0 0 1 8 18.500l-8-7.500z" fill={BL} stroke={BS} /></>,
  <><circle cx="11.500" cy="11.500" r="8" stroke={BL} strokeWidth="6" fill="none" /><path d="M3.500 11.500a8 8 0 0 1 8-8" stroke={WH} strokeWidth="6" fill="none" /><circle cx="11.500" cy="11.500" r="11" fill="none" stroke={BS} /><circle cx="11.500" cy="11.500" r="5" fill="#f3f2f1" stroke={BS} /><path d="M.5 11.500a11 11 0 0 1 11-11v6a5 5 0 0 0-5 5z" fill="none" stroke={GS} /></>,
  <><Box x={0} y={0} w={11} h={11} f={BL} s={BS} /><Box x={0} y={11} w={11} h={11} f={BL} s={BS} /><Box x={11} y={0} w={11} h={7} f={WH} /><Box x={11} y={7} w={5} h={15} f={WH} s={GS} /><Box x={16} y={7} w={6} h={7} f={WH} /><Box x={16} y={14} w={6} h={8} f={WH} /></>,
  <><circle cx="12.500" cy="9.500" r="7.500" fill={WH} stroke={DK} /><path d="M8 5l4-2 2 3-3 4-4-1zM14 9l5-1-1 5-3 3-2-4z" fill="#2b9348" /><path d="M12 .5C5 0 1 8 5 14s11 6 15 2M12.500 18v3.500M4 22h17" stroke={DK} strokeWidth="1.400" fill="none" /></>,
  <><path d="M0 1h9l3 3 4-3h6.500v8l-2 8-5 3-5 1-4-3-6-2V9L2 8z" fill={GR} stroke={GS} /><path d="M0 1h8l2 3v6H2V7zM12 11h10l-2 7-4 1-2 2-3-2z" fill={BL} stroke={BS} /></>,
  <><path d="M0 1h9l3 3 4-3h6.500v8l-2 8-5 3-5 1-4-3-6-2V9L2 8z" fill={WH} stroke="#1a86d0" strokeWidth="1.200" /><path d="M2 10h20M10 3v7M12 11l-1 8M16 2v8" stroke="#1a86d0" strokeWidth="1.200" /></>,
  <><path d="M14.500 0L1 20l11-3z" fill="#56b4dd" /><path d="M14.500 0L12 17l8 6z" fill="#1a7fc4" /></>,
  <><path d="M.7 17a11 11 0 0 1 21.600 0h-6a5.500 5.500 0 0 0-9.600 0z" fill={WH} stroke={DK} /><path d="M8 7a11 11 0 0 1 14.300 10h-6a5 5 0 0 0-6-4z" fill={BL} stroke={BS} /><path d="M17 9l-5 9-2-2z" fill={DK} /></>,
  <><Box x={0} y={2} w={22} h={17} f={WH} /><text x="11.500" y="14.500" textAnchor="middle" fontSize="11" fill="#1a86d0" fontFamily="Open Sans">123</text><path d="M3 17.500h17" stroke={GS} /></>,
  <><Box x={0} y={0} w={22} h={22} f={WH} /><path d="M4.500 3v17" stroke={GS} /><path d="M7 6h9M7 14h11" stroke={BS} strokeWidth="2" /><path d="M7 9.500h6M7 17.500h6" stroke={GS} strokeWidth="1.200" /></>,
  <><Box x={0} y={1} w={22} h={18} f={WH} /><path d="M3 13l4-8 4 8z" fill="#2b9348" /><path d="M12 5h8l-4 8z" fill="#d13438" /><path d="M3 16.500h17" stroke={GS} /></>,
  <><Box x={0} y={0} w={22} h={21} f={WH} /><path d="M1 1h21v3H1z" fill={GR} /><path d="M1 4.500h21" stroke={GS} /><Box x={4} y={8} w={4} h={4} f={GR} s={GS} /><Box x={4} y={14} w={4} h={4} f={GR} s={GS} />{funnelSmall}</>,
  <><Box x={0} y={0} w={22} h={22} f={WH} /><path d="M1 1h21v3.500H1z" fill={GR} /><path d="M1 5h21M1 11h21M1 16.500h21M8 5v17M15.500 5v17" stroke={DK} /></>,
  <><Box x={0} y={0} w={22} h={22} f={WH} /><path d="M1 1h21v3.500H1z" fill={GR} /><path d="M15.500 5H22v17H1v-5.500h14.500z" fill={BL} /><path d="M1 5h21M1 11h21M1 16.500h21M8 5v17M15.500 5v17" stroke={DK} /></>,
  <text x="10" y="18.500" textAnchor="middle" fontSize="19" fontWeight="700" fill="#1f7fbf" fontFamily="Open Sans">R</text>,
  <text x="11" y="15.500" textAnchor="middle" fontSize="19" fontWeight="700" fill="#1f7fbf" fontFamily="Open Sans">Py</text>,
  <>{axes}<path d="M1 4.500h15" stroke={BS} strokeWidth="1.300" /><circle cx="18.500" cy="4.500" r="2.800" fill={BL} stroke={BS} /><path d="M1 11h10M1 16h6" stroke={GS} strokeWidth="1.200" /><circle cx="13" cy="11" r="1.800" fill={WH} stroke={GS} /><circle cx="8.500" cy="16" r="1.800" fill={WH} stroke={GS} /></>,
  <><path d="M8 10.500h6M11 3v16M11 3h4M11 19h4" stroke={DK} strokeWidth="1.300" fill="none" /><Box x={0} y={8} w={8} h={5} f={BL} s={BS} /><Box x={14} y={0} w={8} h={5} f={BL} s={BS} /><Box x={14} y={8} w={8} h={5} f={BL} s={BS} /><Box x={14} y={16} w={8} h={5} f={BL} s={BS} /></>,
  <path d="M.7 1.700h21.600v14.600H9l-4.500 5v-5H.7z" fill={WH} stroke={BS} strokeWidth="1.400" />,
  <><path d="M3 5V.7h11l5.500 5.500v16H3V12M14 .7v5.500h5.500" fill={WH} stroke={DK} strokeWidth="1.300" /><circle cx="3" cy="8.500" r="2.300" fill={BL} stroke={BS} /><path d="M8 11h6M10 15h7M6 15h2" stroke="#1a86d0" strokeWidth="1.300" /></>,
  <><path d="M5.500 1h12v8c0 6-3 7-6 7s-6-1-6-7z" fill={WH} stroke={DK} strokeWidth="1.400" /><path d="M5.500 3H.7c0 6 2 8 6 9M17.500 3h4.800c0 6-2 8-6 9M11.500 16v4" fill="none" stroke={DK} strokeWidth="1.400" /><path d="M5.500 1h12v3h-12zM6 20h11v3H6z" fill={BL} stroke={BS} /></>,
  <><path d="M3 .7h11.500l5.500 5.500v16.500H3zM14.500.7v5.500H20" fill={WH} stroke={DK} strokeWidth="1.400" /><path d="M5 14h3v6H5zM10 17h3v3h-3zM15 11h3v9h-3z" fill={DK} /></>,
  <><Box x={1} y={3} w={21} h={17} f={WH} /><text x="14" y="16" textAnchor="middle" fontSize="10.500" fill="#1a86d0" fontFamily="Open Sans">123</text><path d="M6 18h14" stroke={GS} />{bolt}</>,
  <><Box x={12} y={2} w={9} h={9} f={WH} s={GS} /><Box x={1} y={13} w={9} h={8} f={WH} s={GS} />{funnelSmall}{bolt}</>,
  <><path d="M1 1h21.500v21.500H1z" fill="#f0f6fb" /><path d="M9 1.500h13.500v12M1.500 13v9.500H14" fill="none" stroke={BS} strokeWidth="1.500" /><path d="M22 2c-3 6-7 4-8 9s2 5-3 11H5c3-5-1-8 4-12s3-6 7-8z" fill={BL} stroke={BS} strokeWidth=".8" /><path d="M0 1h8v7l-4 6-4-6z" fill="#e0700c" /><circle cx="4" cy="4.500" r="1.700" fill="#fff" /><circle cx="20" cy="20.500" r="3.300" fill="#e0700c" stroke="#f3f2f1" /><circle cx="22.500" cy="14.500" r="1.600" fill="#e0700c" /></>,
  <><path d="M8.500 1.500h6l8 10-8 10h-6l-8-10z" fill={WH} stroke="#8a2da5" strokeWidth="1.300" /><path d="M8.500 1.500l8 10-8 10M14.500 1.500l-8 10 8 10" fill="none" stroke="#8a2da5" strokeWidth="1" /></>,
  <><path d="M.7 2.500h14l7.600 9-7.600 9H.7L8 11.500z" fill={WH} stroke="#0f7be0" strokeWidth="1.400" /><path d="M8 20.500l9-12M1 20L16 4M7 2.500l4 5" stroke="#0f7be0" strokeWidth="1.300" /></>,
  <path d="M3 8h2.500M10.500 8H13M18 8h2.500" stroke={DK} strokeWidth="2.200" />,
];

const DoubleChevron = ({ flip = false }: { flip?: boolean }) => (
  <svg viewBox="0 0 16 16" className={`h-4 w-4 shrink-0 ${flip ? "rotate-180" : ""}`} fill="none" stroke="#252423" strokeWidth="1.300">
    <path d="M1 .7L8 8l-7 7.300M8 .7L15 8l-7 7.300" />
  </svg>
);

const FiltersPane = () => (
  <div className="flex h-[746px] w-[41px] shrink-0 flex-col items-center border-l border-[#b0aeac] bg-white pt-4">
    <DoubleChevron flip />
    <svg viewBox="0 0 16 16" className="ml-1.5 mt-[19px] h-4 w-4" fill="none" stroke="#252423" strokeWidth="1.500">
      <path d="M14.500 1v14L8.500 10.500H4L1 6.500h7.500z" />
    </svg>
    <span className="mt-2.5 text-[17.700px] font-semibold leading-5 [writing-mode:vertical-rl]">Filters</span>
  </div>
);

const field = "flex w-[213px] items-center rounded-[3px] border border-dashed border-[#c8c6c4] bg-white whitespace-nowrap";

const VizPane = () => (
  <section className="flex h-[790px] w-[226px] shrink-0 flex-col border-l border-[#d8d6d4] bg-[#f3f2f1] text-[14.200px] text-[#252423]">
    <div className="flex items-center justify-between pl-2.5 pr-2.5 pt-[10px]">
      <h2 className="text-[18.500px] font-semibold leading-7 tracking-[-0.050px]">Visualizations</h2>
      <DoubleChevron />
    </div>
    <div className="pl-2.5 pt-[10px] font-semibold leading-5 tracking-[-0.150px]">Build visual</div>
    <div className="flex gap-12 pl-2.5 pt-1">
      <span className="flex h-10 w-10 items-center justify-center rounded-[2px] bg-[#d2d0ce]">
        <svg viewBox="0 0 30 30" className="h-[30px] w-[30px]">
          <path d="M0 .8h24" stroke="#252423" strokeWidth="1.500" />
          <rect x="1" y="7" width="28" height="8.500" fill="#117865" stroke="#111" strokeWidth="1.400" strokeDasharray="2 1.300" />
          <rect x="1" y="20.500" width="28" height="8.500" fill="#117865" stroke="#111" strokeWidth="1.400" strokeDasharray="2 1.300" />
        </svg>
      </span>
      <svg viewBox="0 0 30 30" className="mt-[5px] h-[30px] w-[30px]" fill="none" stroke="#252423" strokeWidth="1.500">
        <path d="M5 29H1V1h12l8 8v3M13 1v8.500h8" />
        <path d="M18 21L28 11c1-1 2 0 1 1.500L20 23.500zM18 21c-5 0-4 6-10 7.500 7 1.500 13-1 12-5z" fill="#f3f2f1" />
      </svg>
    </div>
    <svg viewBox="0 0 225 11" className="mt-[5px] h-[11px] w-[225px]" fill="none" stroke="#979593">
      <path d="M0 10.500h20.500L30 1l9.500 9.500H225" />
    </svg>
    <div className="ml-3.5 mt-3.5 grid grid-cols-[repeat(6,23px)] gap-3">
      {gallery.map((g, i) => (
        <svg key={i} viewBox="0 0 23 23" className="h-[23px] w-[23px] overflow-visible" fill="none">
          {g}
        </svg>
      ))}
    </div>
    <div className="mt-[10px] border-t border-[#d8d6d4]" />
    <div className="pl-[15px] pt-[11px] leading-5 tracking-[-0.200px]">Values</div>
    <div className={`${field} ml-[5px] mt-[7px] h-[35px] pl-3 tracking-[0.020px]`}>Add data fields here</div>
    <div className="pl-[15px] pt-[13px] leading-5 tracking-[0.250px] text-[#3b3a39] [-webkit-text-stroke:0.200px]">Drill through</div>
    <div className="mt-[11px] flex h-5 items-center justify-between pl-[15px] pr-[27px] tracking-[-0.050px]">
      Cross-report
      <span className="flex h-5 w-10 items-center gap-0.5 rounded-full border border-[#797775] bg-white pl-[5px] text-[11px] text-[#605e5c]">
        <i className="h-2.5 w-2.5 rounded-full bg-[#605e5c]" />Off
      </span>
    </div>
    <div className="mt-[14px] flex h-5 items-center justify-between pl-[15px] pr-[27px] tracking-[-0.050px]">
      Keep all filters
      <span className="flex h-5 w-10 items-center justify-between rounded-full bg-[#117865] pl-1.5 pr-1.5 text-[11px] text-white">
        On<i className="h-2.5 w-2.5 rounded-full bg-white" />
      </span>
    </div>
    <div className={`${field} ml-[5px] mt-[13px] h-8 pl-2.5 tracking-[0.080px]`}>Add drill-through fields here</div>
  </section>
);

const DataPane = () => (
  <section className="flex h-[790px] w-[220px] shrink-0 flex-col overflow-hidden border-l border-[#d8d6d4] bg-[#f3f2f1] text-[#252423]">
    <div className="flex items-center justify-between pl-[11px] pr-1 pt-[10px]">
      <h2 className="text-[18.500px] font-semibold leading-7 tracking-[-0.100px]">Data</h2>
      <DoubleChevron />
    </div>
    <div className="ml-1.5 mt-[18px] flex h-[30px] w-[216px] shrink-0 items-center rounded border border-[#d2d0ce] border-b-[#605e5c] bg-white pl-3.5">
      <svg viewBox="0 0 18 18" className="h-[18px] w-[18px]" fill="none" stroke="#605e5c" strokeWidth="1.300">
        <circle cx="7.500" cy="7.500" r="6.500" />
        <path d="M12.500 12.500L17.500 17.500" />
      </svg>
      <span className="ml-2 mt-0.5 text-[16.500px] text-[#605e5c]">Search</span>
    </div>
    <div className="mt-[14px] flex h-6 items-center pl-[19px] text-[14.200px] tracking-[-0.100px]">
      <svg viewBox="0 0 8 14" className="h-3.5 w-2" fill="none" stroke="#484644" strokeWidth="1.200">
        <path d="M1 .5L7 7l-6 6.500" />
      </svg>
      <svg viewBox="0 0 16 16" className="ml-[9px] mr-[7px] h-4 w-4" fill="none" stroke="#252423" strokeWidth="1.200">
        <rect x=".7" y=".7" width="14.600" height="14.600" rx="3" />
        <path d="M5.500 1v14M10.500 1v14M1 5.500h14M1 10.500h14" />
      </svg>
      Data
    </div>
  </section>
);

const StatusBar = () => (
  <footer className="flex h-[29px] shrink-0 items-center overflow-hidden whitespace-nowrap border-t border-[#d8d6d4] bg-[#f3f2f1] text-[14.200px] text-[#3b3a39]">
    <span className="-ml-1 mt-0.5 w-[1408px] shrink-0 tracking-[0.100px]">Page 1 of 1</span>
    <svg viewBox="0 0 156 16" className="ml-px h-4 w-[156px] shrink-0" fill="none" stroke="#484644">
      <path d="M1 8h5M144 8h9M148.500 3.500v9" strokeWidth="1.800" />
      <path d="M12.500 8.500H137M74.500 5v7" />
      <path d="M61.500 2v13" strokeWidth="5" stroke="#605e5c" />
    </svg>
    <span className="ml-3.5 mb-0.5 w-[52px] shrink-0 tracking-[-0.100px] text-[#605e5c]">82%</span>
    <svg viewBox="0 0 21 16" className="h-4 w-[21px] shrink-0" fill="none" stroke="#605e5c" strokeWidth="1.400">
      <path d="M1 1h19v14H1zM4 6V3.500h3M14 3.500h3V6M17 10v2.500h-3M7 12.500H4V10" />
    </svg>
    <span className="ml-4 mt-0.5 tracking-[0.070px]">Update available (click to download)</span>
  </footer>
);

export default function App() {
  return (
    <div className="flex h-[1023px] w-[1904px] flex-col overflow-hidden bg-[#f3f2f1] font-['Open_Sans',sans-serif] text-black">
      <TitleBar />
      <Menu />
      <Ribbon />
      <main className="flex h-[790px] shrink-0">
        <Rail />
        <div className="flex w-[1417px] shrink-0 flex-col">
          <div className="flex">
            <Canvas />
            <FiltersPane />
          </div>
          <PageTabs />
        </div>
        <VizPane />
        <DataPane />
      </main>
      <StatusBar />
      <div className="h-1 shrink-0 bg-[#1b1a19]" />
    </div>
  );
}
